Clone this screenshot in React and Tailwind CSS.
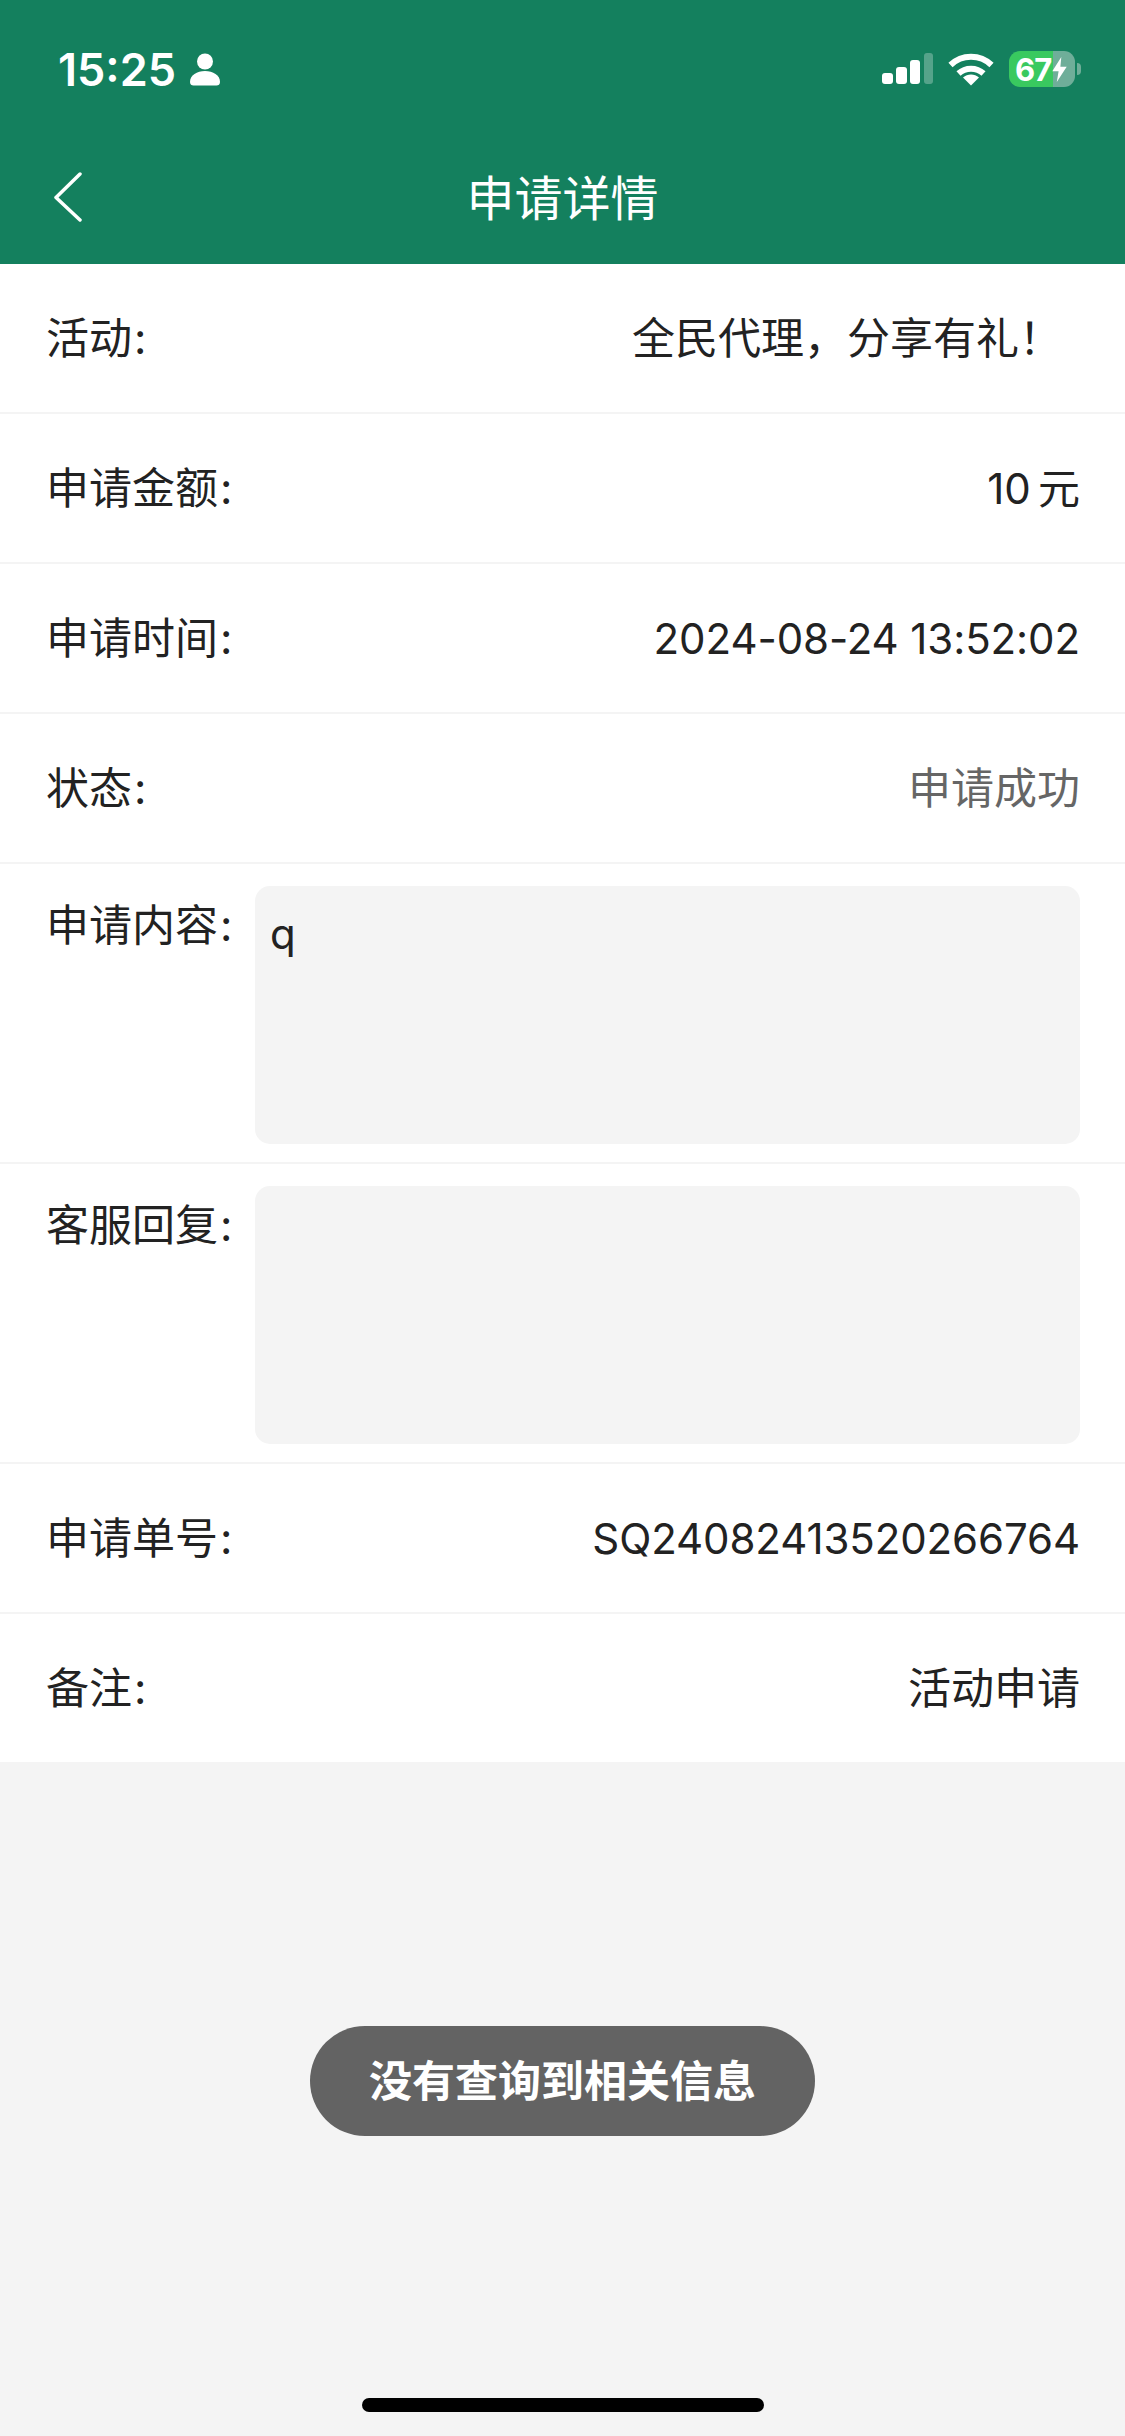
import React from "react";

const topRows = [
  { label: "活动", value: "全民代理，分享有礼！", cjk: true, gap: true },
  { label: "申请金额", value: "10\u2009元" },
  { label: "申请时间", value: "2024-08-24 13:52:02" },
  { label: "状态", value: "申请成功", cjk: true, muted: true },
];

const boxRows = [
  { label: "申请内容", value: "q" },
  { label: "客服回复", value: "" },
];

const bottomRows = [
  { label: "申请单号", value: "SQ24082413520266764" },
  { label: "备注", value: "活动申请", cjk: true },
];

function Label({ text }) {
  return (
    <span className="text-[43px]">
      {text}
      <span className="ml-[2px]">:</span>
    </span>
  );
}

function Row({ label, value, cjk, muted, gap }) {
  return (
    <div className="flex h-[150px] items-center justify-between border-b-[2px] border-[#f4f4f4] bg-white pr-[45px] pl-[46px] text-[42px] text-[#222222]">
      <Label text={label} />
      <span
        className={`${cjk ? "text-[43px]" : "tracking-[-0.1px]"} ${muted ? "text-[#666666]" : ""} ${gap ? "mr-[18px]" : ""}`}
      >
        {value}
      </span>
    </div>
  );
}

function BoxRow({ label, value }) {
  return (
    <div className="flex h-[300px] border-b-[2px] border-[#f4f4f4] bg-white pt-[22px] pr-[45px] pl-[46px] text-[42px] text-[#222222]">
      <div className="w-[209px] shrink-0 pt-[14px] leading-[50px]">
        <Label text={label} />
      </div>
      <div className="h-[258px] flex-1 rounded-[15px] bg-[#f4f4f4] px-[15px] pt-[23px] leading-[50px]">
        {value}
      </div>
    </div>
  );
}

function StatusBar() {
  return (
    <div className="flex h-[138px] items-center justify-between pr-[44px] pl-[58px] text-white">
      <div className="flex items-center gap-[14px]">
        <span className="text-[45px] leading-none font-semibold">15:25</span>
        <svg width="30" height="33" viewBox="0 0 30 33" fill="white">
          <circle cx="15" cy="8.5" r="8" />
          <path d="M0 29c0-7 7-11 15-11s15 4 15 11c0 2.500-1.500 3.500-3.500 3.500h-23C1.500 32.500 0 31.500 0 29z" />
        </svg>
      </div>
      <div className="flex items-center">
        <svg width="52" height="32" viewBox="0 0 52 32" fill="white" className="mr-[14px]">
          <rect x="0" y="20" width="11" height="11" rx="3" />
          <rect x="14" y="14" width="11" height="17" rx="3" />
          <rect x="28" y="7" width="10" height="24" rx="3" />
          <rect x="42" y="0" width="9" height="31" rx="3" fillOpacity="0.28" />
        </svg>
        <svg width="46" height="34" viewBox="0 0 46 34" className="mr-[15px]" fill="none" stroke="white" strokeWidth="6">
          <path d="M2.500 13C14 2 32 2 43.500 13" />
          <path d="M10.500 21.500C17.500 15 28.500 15 35.500 21.500" />
          <path d="M23 33.500L15 25.500C19.500 21.500 26.500 21.500 31 25.500z" fill="white" stroke="none" />
        </svg>
        <div className="flex h-[36px] w-[66px] items-center rounded-[11px] bg-[linear-gradient(90deg,#39c95f_67%,#6fae99_67%)] pl-[6px]">
          <span className="text-[31px] leading-none font-bold tracking-[-1px]">67</span>
          <svg width="17" height="27" viewBox="0 0 18 30" fill="white" className="shrink-0">
            <path d="M11 1L1 17h7l-2 12L17 12h-7z" />
          </svg>
        </div>
        <div className="ml-[2px] h-[12px] w-[4px] rounded-r-full bg-[#6fae99]" />
      </div>
    </div>
  );
}

export default function App() {
  return (
    <div
      className="relative flex h-[2436px] w-[1125px] flex-col overflow-hidden bg-[#f4f4f4]"
      style={{ fontFamily: 'Inter, "Noto Sans CJK SC", sans-serif' }}
    >
      <div className="h-[264px] bg-[#14805e]">
        <StatusBar />
        <div className="relative flex h-[122px] items-center justify-center">
          <svg
            width="30"
            height="50"
            viewBox="0 0 30 50"
            fill="none"
            stroke="white"
            strokeWidth="3.500"
            strokeLinecap="round"
            strokeLinejoin="round"
            className="absolute top-[34px] left-[54px]"
          >
            <path d="M26 2L2 25.500 26 48" />
          </svg>
          <span className="text-[48px] leading-none text-white">申请详情</span>
        </div>
      </div>

      {topRows.map((r) => (
        <Row key={r.label} {...r} />
      ))}
      {boxRows.map((r) => (
        <BoxRow key={r.label} {...r} />
      ))}
      {bottomRows.map((r) => (
        <Row key={r.label} {...r} />
      ))}

      <div className="absolute top-[2026px] left-[310px] flex h-[110px] w-[505px] items-center justify-center rounded-full bg-[#636363] text-[43px] font-semibold text-white">
        没有查询到相关信息
      </div>
      <div className="absolute top-[2398px] left-[362px] h-[14px] w-[402px] rounded-full bg-black" />
    </div>
  );
}
